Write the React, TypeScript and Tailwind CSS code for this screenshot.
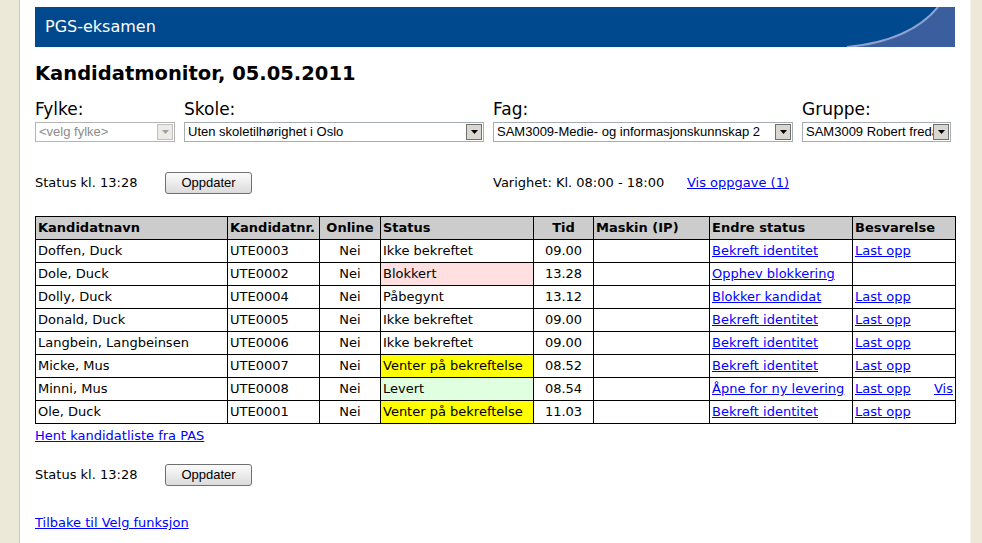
import React from 'react';

type Row = {
  name: string;
  nr: string;
  status: string;
  statusBg?: string;
  tid: string;
  action: string;
  upload: boolean;
  vis?: boolean;
};

const rows: Row[] = [
  { name: 'Doffen, Duck', nr: 'UTE0003', status: 'Ikke bekreftet', tid: '09.00', action: 'Bekreft identitet', upload: true },
  { name: 'Dole, Duck', nr: 'UTE0002', status: 'Blokkert', statusBg: 'bg-[#ffdfe0]', tid: '13.28', action: 'Opphev blokkering', upload: false },
  { name: 'Dolly, Duck', nr: 'UTE0004', status: 'Påbegynt', tid: '13.12', action: 'Blokker kandidat', upload: true },
  { name: 'Donald, Duck', nr: 'UTE0005', status: 'Ikke bekreftet', tid: '09.00', action: 'Bekreft identitet', upload: true },
  { name: 'Langbein, Langbeinsen', nr: 'UTE0006', status: 'Ikke bekreftet', tid: '09.00', action: 'Bekreft identitet', upload: true },
  { name: 'Micke, Mus', nr: 'UTE0007', status: 'Venter på bekreftelse', statusBg: 'bg-[#ffff00]', tid: '08.52', action: 'Bekreft identitet', upload: true },
  { name: 'Minni, Mus', nr: 'UTE0008', status: 'Levert', statusBg: 'bg-[#e0ffe0]', tid: '08.54', action: 'Åpne for ny levering', upload: true, vis: true },
  { name: 'Ole, Duck', nr: 'UTE0001', status: 'Venter på bekreftelse', statusBg: 'bg-[#ffff00]', tid: '11.03', action: 'Bekreft identitet', upload: true },
];

const verdana = { fontFamily: '"DejaVu Sans", Verdana, sans-serif' };
const arial = { fontFamily: '"Liberation Sans", Arial, sans-serif' };

const FakeSelect: React.FC<{ width: string; label: string; value: string; disabled?: boolean }> = ({ width, label, value, disabled }) => (
  <div className={`flex flex-col ${width}`}>
    <div className="h-[20px] text-[17px] leading-[20px] text-black" style={verdana}>{label}</div>
    <div className={`mt-[3px] flex h-[20px] items-center border ${disabled ? 'border-[#b5b5b5]' : 'border-[#a5acb2]'} bg-white pl-[3px] pr-[1px]`}>
      <span className={`flex-1 overflow-hidden whitespace-nowrap text-[13px] leading-[16px] ${disabled ? 'text-[#8c8c8c]' : 'text-black'}`} style={arial}>{value}</span>
      <div className={`flex h-[16px] w-[16px] shrink-0 items-center justify-center border ${disabled ? 'border-[#c0c0c0] bg-[#ecebe6]' : 'border-[#6f6f6f] bg-[#d9d7d0]'}`}>
        <svg width="7" height="4" viewBox="0 0 7 4"><path d="M0 0h7L3.5 4z" fill={disabled ? '#a0a0a0' : '#000'} /></svg>
      </div>
    </div>
  </div>
);

const Button: React.FC = () => (
  <button
    className="h-[22px] w-[87px] rounded-[3px] border border-[#707070] bg-gradient-to-b from-[#fbfbfb] to-[#dcdcdc] text-[13px] leading-[18px] text-black"
    style={arial}
  >
    Oppdater
  </button>
);

const Link: React.FC<{ children: React.ReactNode }> = ({ children }) => (
  <a href="#" className="text-[#0000ff] underline">{children}</a>
);

export default function App() {
  return (
    <div className="flex h-[543px] w-[982px] overflow-hidden bg-[#ece9d8]">
      <div className="w-[20px] shrink-0 border-r border-[#cfcbb8]" />
      <div className="w-[950px] shrink-0 bg-white pl-[15px]">
        {/* banner */}
        <div className="relative mt-[7px] flex h-[40px] w-[920px] items-center bg-[#00498f] pl-[10px]">
          <svg className="absolute left-0 top-0" width="920" height="40" viewBox="0 0 920 40">
            <path d="M812 40 Q875 34 903 0 L920 0 L920 40 Z" fill="#3a5e9e" />
            <path d="M812 40 Q875 34 903 0" fill="none" stroke="#8fa3d0" strokeWidth="2" />
          </svg>
          <span className="relative text-[16px] text-white" style={verdana}>PGS-eksamen</span>
        </div>

        <h1 className="mt-[15px] h-[24px] text-[19.5px] font-bold leading-[24px] text-black" style={verdana}>
          Kandidatmonitor, 05.05.2011
        </h1>

        <div className="mt-[13px] flex gap-[9px]">
          <FakeSelect width="w-[140px]" label="Fylke:" value="<velg fylke>" disabled />
          <FakeSelect width="w-[300px]" label="Skole:" value="Uten skoletilhørighet i Oslo" />
          <FakeSelect width="w-[300px]" label="Fag:" value="SAM3009-Medie- og informasjonskunnskap 2" />
          <FakeSelect width="w-[149px]" label="Gruppe:" value="SAM3009 Robert freda" />
        </div>

        <div className="mt-[30px] flex h-[22px] items-center text-[13px] text-black" style={verdana}>
          <span className="w-[130px]">Status kl. 13:28</span>
          <Button />
          <span className="ml-[241px] w-[194px]">Varighet: Kl. 08:00 - 18:00</span>
          <Link>Vis oppgave (1)</Link>
        </div>

        <table className="mt-[22px] w-[920px] table-fixed border-collapse text-[13px] text-black" style={verdana}>
          <colgroup>
            <col className="w-[192px]" />
            <col className="w-[92px]" />
            <col className="w-[61px]" />
            <col className="w-[153px]" />
            <col className="w-[60px]" />
            <col className="w-[116px]" />
            <col className="w-[143px]" />
            <col className="w-[103px]" />
          </colgroup>
          <thead>
            <tr className="h-[23px] bg-[#cccccc] font-bold">
              <th className="border border-black px-[2px] text-left">Kandidatnavn</th>
              <th className="border border-black px-[2px] text-left">Kandidatnr.</th>
              <th className="border border-black px-[2px] text-center">Online</th>
              <th className="border border-black px-[2px] text-left">Status</th>
              <th className="border border-black px-[2px] text-center">Tid</th>
              <th className="border border-black px-[2px] text-left">Maskin (IP)</th>
              <th className="border border-black px-[2px] text-left">Endre status</th>
              <th className="border border-black px-[2px] text-left">Besvarelse</th>
            </tr>
          </thead>
          <tbody>
            {rows.map((r) => (
              <tr key={r.nr} className="h-[23px]">
                <td className="border border-black px-[2px] whitespace-nowrap">{r.name}</td>
                <td className="border border-black px-[2px]">{r.nr}</td>
                <td className="border border-black px-[2px] text-center">Nei</td>
                <td className={`border border-black px-[2px] whitespace-nowrap ${r.statusBg ?? ''}`}>{r.status}</td>
                <td className="border border-black px-[2px] text-center">{r.tid}</td>
                <td className="border border-black px-[2px]"></td>
                <td className="border border-black px-[2px] whitespace-nowrap"><Link>{r.action}</Link></td>
                <td className="border border-black px-[2px] whitespace-nowrap">
                  {r.upload && (
                    <div className="flex justify-between">
                      <Link>Last opp</Link>
                      {r.vis && <Link>Vis</Link>}
                    </div>
                  )}
                </td>
              </tr>
            ))}
          </tbody>
        </table>

        <div className="mt-[4px] text-[13px] leading-[16px]" style={verdana}>
          <Link>Hent kandidatliste fra PAS</Link>
        </div>

        <div className="mt-[20px] flex h-[22px] items-center text-[13px] text-black" style={verdana}>
          <span className="w-[130px]">Status kl. 13:28</span>
          <Button />
        </div>

        <div className="mt-[29px] text-[13px] leading-[16px]" style={verdana}>
          <Link>Tilbake til Velg funksjon</Link>
        </div>
      </div>
      <div className="flex-1 border-l border-[#f4f2ea]" />
    </div>
  );
}
